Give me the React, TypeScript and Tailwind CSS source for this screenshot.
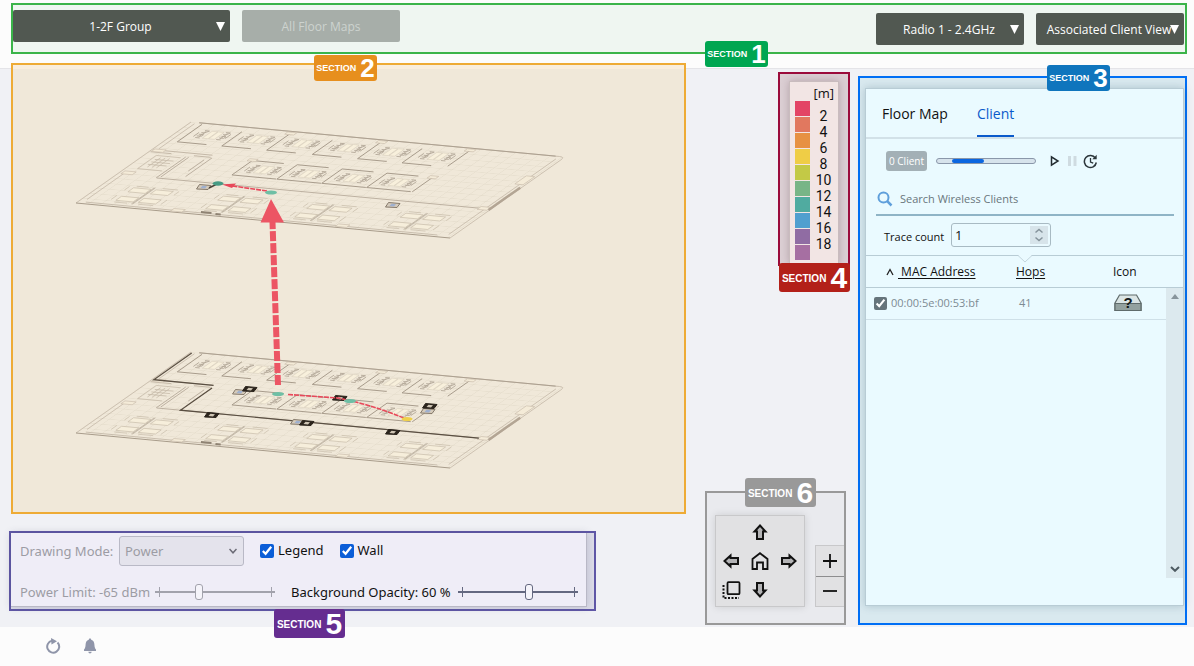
import { useState } from 'react';
import type { ReactNode } from 'react';

function SectionTag({ n, className, large = false }: { n: number; className: string; large?: boolean }) {
  return (
    <span
      className={`absolute z-10 flex items-center justify-center rounded-[3px] font-['Liberation_Sans',sans-serif] font-bold text-white ${
        large ? 'h-[29px] w-[71px] gap-1 text-[10px]' : 'h-[26px] w-[63px] gap-1 text-[9px]'
      } ${className}`}
    >
      <span className="pt-0.5">SECTION</span>
      <span className={large ? 'text-[30px] leading-none' : 'text-[26px] leading-none'}>{n}</span>
    </span>
  );
}

function BarSelect({ label, value, className }: { label: string; value: string; className: string }) {
  return (
    <div className={`relative ${className}`}>
      <select
        aria-label={label}
        className="h-8 w-full appearance-none rounded-[2px] bg-[#515851] pt-0.5 pr-0.5 text-center text-[12px] text-white [text-align-last:center]"
      >
        <option>{value}</option>
      </select>
      <svg viewBox="0 0 9 9" className="pointer-events-none absolute top-3 right-[5px] size-[9px] fill-white">
        <path d="M0 0h9L4.5 9z" />
      </svg>
    </div>
  );
}

const topRooms = [34, 153, 273, 395, 516, 635];
const midRooms = [274, 394, 514, 634];
const deskClusters = [137, 377, 615, 865];

function Seats({ x, y }: { x: number; y: number }) {
  return (
    <g transform={`translate(${x} ${y})`}>
      <rect x="-15" y="-18" width="15" height="34" fill="#f8f0dc" stroke="#d3c8b6" strokeWidth="0.5" />
      <rect x="2" y="-18" width="15" height="34" fill="#f8f0dc" stroke="#d3c8b6" strokeWidth="0.5" />
      <path
        d="M-34 -18h12l-6 10h-8M-36 0h12v8h-12M-34 16h12M22 -18h12l-4 10h-8M24 0h12v8h-12M22 16h12M-42 -8v20M40 -12v20M-28 -14v26M29 -14v26"
        fill="none"
        stroke="#b3a898"
        strokeWidth="0.9"
      />
    </g>
  );
}

function Desks({ x }: { x: number }) {
  return (
    <g transform={`translate(${x} 342)`} fill="#f6eedb" stroke="#c9bdab" strokeWidth="0.7">
      <path d="M0 -40V40M-3 -40V40" fill="none" stroke="#b3a797" />
      <rect x="-52" y="-32" width="46" height="20" />
      <rect x="-52" y="10" width="46" height="20" />
      <rect x="8" y="-32" width="46" height="20" />
      <rect x="8" y="10" width="46" height="20" />
      <path d="M-66 -36v18M-66 8v20M68 -34v18M68 8v22M-50 -40h32M20 -40h40M-50 38h34M14 38h40" fill="none" />
    </g>
  );
}

function FloorPlan({ y, walls }: { y: number; walls: boolean }) {
  return (
    <g transform={`matrix(0.374 0.035 -0.2875 0.2025 191 ${y})`} className="[&_*]:[vector-effect:non-scaling-stroke]">
      <rect width="1000" height="400" fill="url(#tiles)" />
      <g fill="none" stroke="#c4b8a7" strokeWidth="1">
        <path d="M22 0H985Q1000 0 1000 14V400M985 12V385M0 0V400M14 6V130M14 250V380" strokeOpacity="0.8" />
        <path d="M22 0H975" stroke="#aca090" />
        <path d="M20 392H960" stroke="#c9beae" />
        <path d="M0 400H1000" stroke="#a89c8b" />
        <path d="M4 136H162M4 146H60M120 146H165" />
        <path d="M105 155V258M113 155V252M107 258H1000M170 148V240M158 160V215" stroke="#bdb1a1" />
        <path d="M30 160H95M30 225H95M30 160V225M40 178h50M40 190h50M40 202h50M48 168v46M60 168v46M72 168v46" strokeOpacity="0.75" />
      </g>
      <g fill="none" stroke="#a89c8c" strokeWidth="1">
        {topRooms.map((u, i) => (
          <path key={u} d={`M${u} ${i % 2 ? 22 : 6}V92H${u + 78}`} />
        ))}
        <path d="M754 6V88" />
        {midRooms.map((u) => (
          <path key={u} d={`M${u + 84} 143H${u}V214H${u + 118}`} />
        ))}
        <path d="M756 143V214" />
      </g>
      {topRooms.map((u) => (
        <Seats key={u} x={u + 62} y={50} />
      ))}
      {midRooms.map((u) => (
        <Seats key={u} x={u + 58} y={180} />
      ))}
      {deskClusters.map((u) => (
        <Desks key={u} x={u} />
      ))}
      <g fill="#f4ebd8" stroke="#cbbfae" strokeWidth="0.7">
        {[262, 505, 742].map((u) => (
          <rect key={u} x={u} y="4" width="24" height="11" />
        ))}
        <rect x="262" y="136" width="22" height="10" />
        <rect x="745" y="136" width="22" height="12" />
        <rect x="972" y="98" width="22" height="40" />
        <rect x="968" y="250" width="26" height="14" />
        <rect x="250" y="384" width="30" height="12" />
        <rect x="690" y="384" width="30" height="12" />
        <rect x="8" y="240" width="30" height="14" />
        <rect x="5" y="132" width="30" height="12" />
      </g>
      <path d="M997 152V262" stroke="#b3a594" strokeWidth="2.5" />
      <path d="M325 388h28M366 391h14" stroke="#8f8373" strokeWidth="2" />
      {walls && (
        <path d="M5 4V136H165M170 148V258H968" fill="none" stroke="#5a4f42" strokeWidth="1.2" />
      )}
    </g>
  );
}

function AccessPoint({ x, y, dark = false }: { x: number; y: number; dark?: boolean }) {
  return (
    <g transform={`translate(${x} ${y})`}>
      <path
        d="M-4.500 -2.500L7 -1.500L4 2.500L-7.500 2Z"
        fill={dark ? '#2b241c' : '#d5cbbb'}
        stroke={dark ? '#2b241c' : '#85796a'}
        strokeWidth="1"
      />
      <path d="M-1.500 -1.200L3 -0.800L1 1.400L-3.500 1Z" fill={dark ? '#cfc5b4' : '#9fb0cf'} />
    </g>
  );
}

function FloorView() {
  return (
    <svg viewBox="13 65 671 447" className="block h-[447px] w-full" role="img" aria-label="Stacked floor maps">
      <defs>
        <pattern id="tiles" width="31" height="25" patternUnits="userSpaceOnUse">
          <path d="M0 0H31M0 0V25" fill="none" stroke="#dad0bf" strokeWidth="2" />
        </pattern>
      </defs>
      <FloorPlan y={122} walls={false} />
      <AccessPoint x={204} y={187} />
      <AccessPoint x={393} y={205} />
      <path d="M209 188l8 -4" stroke="#4b4237" strokeWidth="1.500" />
      <path d="M267 191L226 185" stroke="#e8485a" strokeWidth="1.600" strokeDasharray="5 1" />
      <path d="M222 184.500L236 183.500L232 188Z" fill="#e8485a" />
      <ellipse cx="271" cy="192.500" rx="6" ry="2" fill="#6fbfa5" />
      <ellipse cx="218" cy="183.500" rx="5.500" ry="2.200" fill="#469b84" />

      <FloorPlan y={352} walls />
      <AccessPoint x={240} y={392} />
      <AccessPoint x={298} y={422} />
      <AccessPoint x={428} y={411} />
      <AccessPoint x={250} y={389} dark />
      <AccessPoint x={212} y={415} dark />
      <AccessPoint x={307} y={423} dark />
      <AccessPoint x={340} y={398} dark />
      <AccessPoint x={430} y={406} dark />
      <AccessPoint x={393} y={432} dark />
      <path d="M288 394.500L338 398L356 402Q382 409 404 418" fill="none" stroke="#e8485a" strokeWidth="1.600" strokeDasharray="5 1" />
      <ellipse cx="278" cy="394" rx="6" ry="2" fill="#6fbfa5" />
      <ellipse cx="350" cy="401" rx="6" ry="2" fill="#6fbfa5" />
      <ellipse cx="407" cy="419" rx="5.500" ry="2" fill="#efd04b" />

      <path d="M278 385L272.500 222" stroke="#ec5564" strokeWidth="6" strokeDasharray="10 2" />
      <path d="M271 199L284 222.500H260.500Z" fill="#ec5564" />
    </svg>
  );
}

const legendColors = [
  'bg-[#e34465]',
  'bg-[#e1785f]',
  'bg-[#e79142]',
  'bg-[#efcd46]',
  'bg-[#c3c946]',
  'bg-[#78b587]',
  'bg-[#50aba0]',
  'bg-[#519fcf]',
  'bg-[#906ca3]',
  'bg-[#a66fa2]',
];

function Legend() {
  return (
    <section className="relative mt-[9px] mr-px h-[220px] w-[72px] self-end">
      <div className="h-[194px] overflow-hidden border-2 border-[#9b0b3b] bg-[#dccfd4] px-[9px] pt-[7px]">
        <div className="h-full border border-b-0 border-[#c9bcbe] bg-[#f2e5e4] pl-[5px] shadow-[0_0_8px_rgba(90,60,70,0.3)]">
          <p className="h-[19px] pr-1 text-right text-[13px] leading-[22px]">[m]</p>
          <div className="flex gap-1">
            <div className="flex flex-col gap-px">
              {legendColors.map((c) => (
                <span key={c} className={`h-[15px] w-[15px] ${c}`} />
              ))}
            </div>
            <ol className="w-[19px] pt-[7px] text-center font-[Roboto,sans-serif] text-[14px] leading-4">
              {[2, 4, 6, 8, 10, 12, 14, 16, 18].map((n) => (
                <li key={n}>{n}</li>
              ))}
            </ol>
          </div>
        </div>
      </div>
      <SectionTag n={4} large className="right-0 bottom-0 bg-[#b32019]" />
    </section>
  );
}

function PadArrow({ label, turn, className }: { label: string; turn: string; className: string }) {
  return (
    <button aria-label={label} className={`flex items-center justify-center ${className}`}>
      <svg viewBox="0 0 16 16" className={`size-4 ${turn}`} fill="#b3b3b5" stroke="#111" strokeWidth="2">
        <path d="M8 1.500L13.500 7.500H11V15H5V7.500H2.500Z" />
      </svg>
    </button>
  );
}

function Navigator() {
  return (
    <section className="relative mb-0.5 flex h-[134px] w-[141px] items-end gap-2.5 border-2 border-[#999] bg-[#e9eaee] pb-4 pl-2">
      <SectionTag n={6} large className="-top-[15px] left-[38px] bg-[#999]" />
      <div className="grid h-[92px] w-[90px] grid-cols-3 grid-rows-3 border border-[#c8c8ca] bg-[#e1e1e3] p-px shadow-[0_0_8px_rgba(0,0,0,0.12)]">
        <PadArrow label="Up" turn="" className="col-start-2 row-start-1" />
        <PadArrow label="Left" turn="-rotate-90" className="col-start-1 row-start-2" />
        <button aria-label="Home" className="col-start-2 row-start-2 flex items-center justify-center">
          <svg viewBox="0 0 18 18" className="size-[18px]" fill="none" stroke="#111" strokeWidth="1.800">
            <path d="M1.500 7L9 1.200L16.500 7V17H12V10.500H6V17H1.500Z" />
          </svg>
        </button>
        <PadArrow label="Right" turn="rotate-90" className="col-start-3 row-start-2" />
        <button aria-label="Change layout" className="col-start-1 row-start-3 flex items-center justify-center">
          <svg viewBox="0 0 19 18" className="h-[18px] w-[19px]" fill="none" stroke="#111">
            <rect x="5.500" y="1.200" width="12" height="12" rx="1" strokeWidth="1.800" />
            <path d="M1.500 4V17H17" strokeWidth="2" strokeDasharray="2 1.500" />
          </svg>
        </button>
        <PadArrow label="Down" turn="rotate-180" className="col-start-2 row-start-3" />
      </div>
      <div className="flex h-[62px] flex-1 flex-col border border-r-0 border-[#c8c8ca] bg-[#e1e1e3]">
        <button aria-label="Zoom in" className="flex flex-1 items-center justify-center border-b border-[#8d8d8f]">
          <svg viewBox="0 0 14 14" className="size-3.5" stroke="#111" strokeWidth="1.800">
            <path d="M0 7H14M7 0V14" />
          </svg>
        </button>
        <button aria-label="Zoom out" className="flex flex-1 items-center justify-center">
          <svg viewBox="0 0 14 14" className="size-3.5" stroke="#111" strokeWidth="1.800">
            <path d="M0 7H14" />
          </svg>
        </button>
      </div>
    </section>
  );
}

function ClientPanel() {
  const [checked, setChecked] = useState(true);
  return (
    <section className="relative mt-[13px] mb-0.5 flex w-[329px] border-2 border-[#006ff5] bg-[#d9e9ef] pt-2.5 pr-px pb-[17px] pl-[5px]">
      <SectionTag n={3} className="-top-[13px] left-[187px] bg-[#0f75bd]" />
      <div className="flex min-w-0 flex-1 flex-col border border-[#b8ccd5] bg-[#eafaff] shadow-[0_0_8px_rgba(40,80,100,0.25)]">
        <nav className="flex h-[50px] gap-[29px] border-b-2 border-[#d2e1e8] pl-4 text-[14px]">
          <a href="#floor" className="pt-3.5">Floor Map</a>
          <a href="#client" className="border-b-2 border-[#0a5acb] pt-3.5 text-[#0a5acb]">Client</a>
        </nav>

        <div className="flex items-center pt-3 pl-5">
          <span className="flex h-5 w-[41px] items-center justify-center rounded-[3px] bg-[#a3b0b6] text-[10px] text-white">
            0 Client
          </span>
          <div className="ml-[9px] h-[6px] w-[100px] rounded-full border border-[#8a97aa] bg-[#d7e3ec]">
            <div className="ml-[15px] h-full w-8 rounded-sm bg-[#0b66e0]" />
          </div>
          <button aria-label="Play" className="ml-[14px]">
            <svg viewBox="0 0 10 12" className="h-3 w-2.5" fill="none" stroke="#222b30" strokeWidth="1.500">
              <path d="M1.500 1.800L8 6L1.500 10.200Z" />
            </svg>
          </button>
          <button aria-label="Pause" disabled className="ml-[7px]">
            <svg viewBox="0 0 10 12" className="h-3 w-2.5" fill="#cfdbe1">
              <path d="M1 1h3v10h-3zM6.500 1h3v10h-3z" />
            </svg>
          </button>
          <button aria-label="History" className="ml-[6px]">
            <svg viewBox="0 0 15 15" className="size-[15px]" fill="none" stroke="#2c363b" strokeWidth="1.500">
              <path d="M12.400 4.200A6 6 0 1 0 13.300 8.500" />
              <path d="M13.700 0.800V5.200H9.300Z" fill="#2c363b" stroke="none" />
              <path d="M7.500 4V8L10.200 9.200" strokeWidth="1.300" />
            </svg>
          </button>
        </div>

        <label className="mt-3 mr-[9px] ml-2.5 flex h-[33px] items-center gap-[7px] border-b-2 border-[#8fb4c6] pl-px">
          <svg viewBox="0 0 16 16" className="size-4" fill="none" stroke="#5f9fdb">
            <circle cx="6.500" cy="6.500" r="5" strokeWidth="2" />
            <path d="M10.200 10.200L14.500 14.500" strokeWidth="2.500" />
          </svg>
          <input
            aria-label="Search Wireless Clients"
            placeholder="Search Wireless Clients"
            className="min-w-0 flex-1 pt-0.5 text-[11px] outline-none placeholder:text-[#69767c]"
          />
        </label>

        <div className="mt-[7px] flex h-6 items-center pl-[18px] text-[11px]">
          <label htmlFor="trace" className="w-[67px] pt-1">Trace count</label>
          <div className="flex h-6 w-[100px] items-center rounded-[3px] border border-[#a8bac3] pr-0.5">
            <input id="trace" defaultValue="1" className="min-w-0 flex-1 pt-0.5 pl-[3px] text-[13px] outline-none" />
            <span className="flex h-[18px] w-[18px] items-center justify-center bg-[#d7e4ea]">
              <svg viewBox="0 0 10 14" className="h-3.5 w-2.5" fill="none" stroke="#85939b" strokeWidth="1.500">
                <path d="M1.500 4.500L5 1.500L8.500 4.500M1.500 9.500L5 12.500L8.500 9.500" />
              </svg>
            </span>
          </div>
        </div>

        <div className="relative mt-2 mb-[27px] min-h-[323px] flex-1 border-t border-[#b8ccd5]">
          <svg viewBox="0 0 14 8" className="absolute -top-px left-[152px] h-2 w-3.5">
            <path d="M0 0H14L7 7Z" fill="#eafaff" />
            <path d="M0 0.500L7 7L14 0.500" fill="none" stroke="#c3d5dd" />
          </svg>
          <table className="w-full table-fixed border-collapse text-left">
            <colgroup>
              <col className="w-[144px]" />
              <col className="w-[90px]" />
              <col />
            </colgroup>
            <thead>
              <tr className="h-[31px] border-b border-[#b8ccd5] text-[12px]">
                <th className="pt-0.5 pl-5 font-normal">
                  <span className="flex items-center gap-1">
                    <svg viewBox="0 0 8 8" className="size-2" fill="none" stroke="#222" strokeWidth="1.300">
                      <path d="M1 7L4 1.500L7 7" />
                    </svg>
                    <a href="#mac" className="whitespace-pre underline underline-offset-2"> MAC Address</a>
                  </span>
                </th>
                <th className="pt-0.5 pl-1.5 font-normal"><a href="#hops" className="underline underline-offset-2">Hops</a></th>
                <th className="pt-0.5 pl-[13px] font-normal">Icon</th>
              </tr>
            </thead>
            <tbody>
              <tr className="h-8 border-b border-[#cfe0e8] text-[11px] text-[#7d8b93]">
                <td className="pl-2">
                  <label className="flex items-center gap-1">
                    <input
                      type="checkbox"
                      checked={checked}
                      onChange={() => setChecked(!checked)}
                      className="size-[13px] accent-[#66747b]"
                    />
                    00:00:5e:00:53:bf
                  </label>
                </td>
                <td className="pl-[9px]">41</td>
                <td className="pl-3.5">
                  <svg viewBox="0 0 28 18" className="h-[18px] w-7" role="img" aria-label="Unknown device">
                    <path d="M5.500 1H22.500L27 9V16.500H1V9Z" fill="#dbe5e5" stroke="#5f6b6b" strokeWidth="1.200" />
                    <path d="M1 9.500H27V16.500H1Z" fill="#93a19f" stroke="#5f6b6b" strokeWidth="1.200" />
                    <text x="14" y="14" textAnchor="middle" className="fill-[#14191a] font-['Liberation_Sans',sans-serif] text-[15px] font-bold">?</text>
                  </svg>
                </td>
              </tr>
            </tbody>
          </table>
          <div className="absolute top-8 right-0 bottom-0 flex w-[17px] flex-col items-center justify-between bg-[#dce9ee] py-1.5">
            <svg viewBox="0 0 8 5" className="h-[5px] w-2 fill-[#87949b]">
              <path d="M0 5L4 0L8 5Z" />
            </svg>
            <svg viewBox="0 0 10 6" className="h-1.5 w-2.5" fill="none" stroke="#4d5a61" strokeWidth="2">
              <path d="M1 1L5 4.800L9 1" />
            </svg>
          </div>
        </div>
      </div>
    </section>
  );
}

function TickSlider({ id, min, max, value, disabled = false }: { id: string; min: number; max: number; value: number; disabled?: boolean }) {
  const [v, setV] = useState(value);
  return (
    <span className={`relative flex w-[120px] items-center ${disabled ? 'text-[#a2a2ac]' : 'text-[#646880]'}`}>
      <span className="absolute left-1 h-2.5 w-px bg-current" />
      <span className="absolute right-[3px] h-2.5 w-px bg-current" />
      <span className="absolute inset-x-0 h-0.5 bg-current" />
      <input
        id={id}
        type="range"
        min={min}
        max={max}
        value={v}
        disabled={disabled}
        onChange={(e) => setV(Number(e.target.value))}
        className="relative h-4 w-full appearance-none bg-transparent text-inherit [&::-webkit-slider-thumb]:h-4 [&::-webkit-slider-thumb]:w-2 [&::-webkit-slider-thumb]:appearance-none [&::-webkit-slider-thumb]:rounded-[3px] [&::-webkit-slider-thumb]:border [&::-webkit-slider-thumb]:border-current [&::-webkit-slider-thumb]:bg-[#f5f4fa]"
      />
    </span>
  );
}

function Check({ children }: { children: ReactNode }) {
  return (
    <label className="flex items-center gap-1">
      <input type="checkbox" defaultChecked className="size-3.5 accent-[#0b5ed7]" />
      {children}
    </label>
  );
}

function DrawingControls() {
  return (
    <section className="relative mt-[17px] -ml-0.5 h-20 w-[587px] border-2 border-[#5f57a6] bg-[#dcdce8] pr-[7px] pb-0.5">
      <div className="flex h-full flex-col justify-between border-r border-b border-[#b9b8c6] bg-[#efedf7] pt-[3px] pb-1 pl-[9px] font-['Noto_Sans',sans-serif] text-[13px] shadow-[0_0_8px_rgba(60,60,90,0.2)]">
        <div className="flex items-center">
          <label htmlFor="mode" className="w-[99px] pt-0.5 whitespace-nowrap text-[#9c9ca4]">Drawing Mode:</label>
          <div className="relative w-[125px]">
            <select
              id="mode"
              disabled
              className="h-[30px] w-full appearance-none rounded-[3px] border border-[#b9b9c6] bg-[#e4e3ec] pt-0.5 pl-[5px] text-[#9c9ca4] opacity-100"
            >
              <option>Power</option>
            </select>
            <svg viewBox="0 0 8 6" className="pointer-events-none absolute top-3 right-[7px] h-1.5 w-2" fill="none" stroke="#6b6b76" strokeWidth="1.500">
              <path d="M0.500 1L4 4.800L7.500 1" />
            </svg>
          </div>
          <div className="ml-4 flex gap-4">
            <Check>Legend</Check>
            <Check>Wall</Check>
          </div>
        </div>
        <div className="flex items-center">
          <label htmlFor="limit" className="w-[135px] whitespace-nowrap text-[#9c9ca4]">Power Limit: -65 dBm</label>
          <TickSlider id="limit" min={-85} max={-29} value={-65} disabled />
          <label htmlFor="opacity" className="ml-4 w-[167px] whitespace-nowrap">Background Opacity: 60 %</label>
          <TickSlider id="opacity" min={0} max={100} value={60} />
        </div>
      </div>
      <SectionTag n={5} large className="-bottom-[29px] left-[263px] bg-[#652d90]" />
    </section>
  );
}

export default function App() {
  return (
    <div className="flex min-h-screen flex-col bg-[#fcfcfc] font-['Open_Sans','Noto_Sans',sans-serif] text-[#111]">
      <header className="border-b border-[#e4e4e8] pt-[3px] pr-[7px] pb-3.5 pl-[11px]">
        <div className="relative flex h-[51px] items-start justify-between border-2 border-[#3bb44a] bg-[#eff6f1] pr-px">
          <div className="flex gap-3 pt-[5px]">
            <BarSelect label="Floor group" value="1-2F Group" className="w-[217px]" />
            <button disabled className="h-8 w-[158px] rounded-[2px] bg-[#a7aea9] pt-0.5 text-[12px] text-[#cdd3cf]">
              All Floor Maps
            </button>
          </div>
          <div className="flex gap-3 pt-2">
            <BarSelect label="Radio" value="Radio 1 - 2.4GHz" className="w-[148px]" />
            <BarSelect label="View" value="Associated Client View" className="w-[148px]" />
          </div>
          <SectionTag n={1} className="-bottom-[15px] left-[692px] bg-[#00a651]" />
        </div>
      </header>

      <div className="flex flex-1 flex-col bg-[#f0f1f5]">
        <main className="-mt-1.5 flex flex-1 pr-[7px] pl-[11px]">
          <div className="min-w-0 flex-1 pb-4">
            <section className="relative border-2 border-[#eeab35] bg-[#f0e8d9] shadow-[inset_0_4px_#f9eedd]">
              <FloorView />
              <SectionTag n={2} className="-top-2.5 left-[301px] bg-[#e78f1e]" />
            </section>
            <DrawingControls />
          </div>
          <div className="mr-[7px] ml-[19px] flex w-[146px] flex-col justify-between">
            <Legend />
            <Navigator />
          </div>
          <ClientPanel />
        </main>
      </div>

      <footer className="flex h-[39px] items-center gap-[21px] pb-0.5 pl-[45px] text-[#8f95a9]">
        <button aria-label="Reload">
          <svg viewBox="0 0 16 16" className="size-4" fill="none" stroke="currentColor" strokeWidth="2">
            <path d="M12.500 4.500A6 6 0 1 1 7 2.800" />
            <path d="M6 0L12 3.200L6.500 6.400Z" fill="currentColor" stroke="none" />
          </svg>
        </button>
        <button aria-label="Notifications">
          <svg viewBox="0 0 16 16" className="size-4" fill="currentColor">
            <path d="M8 0.500C8.800 0.500 9.200 1 9.200 1.700C11.500 2.300 12.300 4.300 12.400 6.500C12.500 9 13 10.500 14 11.500V13H2V11.500C3 10.500 3.500 9 3.600 6.500C3.700 4.300 4.500 2.300 6.800 1.700C6.800 1 7.200 0.500 8 0.500ZM6.300 13.800H9.700C9.500 15 8.800 15.500 8 15.500S6.500 15 6.300 13.800Z" />
          </svg>
        </button>
      </footer>
    </div>
  );
}
